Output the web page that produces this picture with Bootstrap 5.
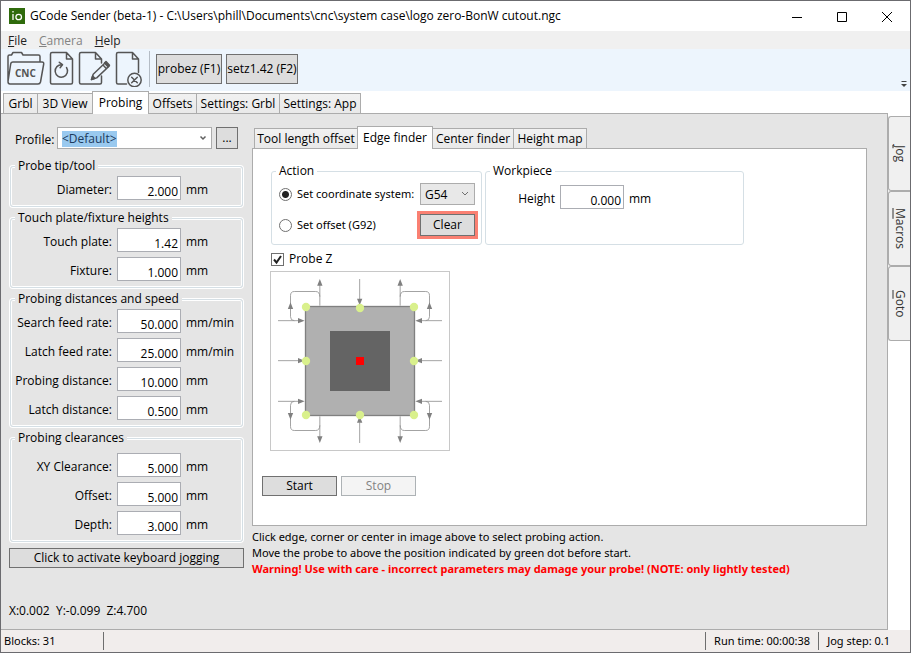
<!DOCTYPE html>
<html lang="en">
<head>
<meta charset="utf-8">
<meta name="viewport" content="width=device-width, initial-scale=1">
<title>GCode Sender (beta-1)</title>
<link rel="stylesheet" href="https://cdn.jsdelivr.net/npm/bootstrap@5.3.0/dist/css/bootstrap.min.css">
<style>
  body { font-family: "Open Sans", "Noto Sans", sans-serif; font-size: 12px; line-height: 16px; color: #000; }
  button, input, select { font: inherit; color: inherit; }
  .win { border: 1px solid #6b6b6f; background: #fff; }
  .titlebar { height: 30px; padding-left: 8px; }
  .appicon { width: 16px; height: 16px; margin-right: 5px; }
  .winbtn { width: 45px; height: 30px; border: 0; background: none; padding: 0 2px 0 0; }
  .menubar { background: #f0f0f0; height: 18px; padding: 2px 7px 0; gap: 12px; }
  .menubar a { color: #222; text-decoration: none; }
  .menubar a.off { color: #838383; }
  .tools { background: #edf5fd; height: 42px; padding: 2px 3px 0 5px; }
  .tools .ico { border: 0; background: none; padding: 0; display: block; line-height: 0; }
  .tools .ico svg { fill: none; stroke: #555; stroke-width: 1.5; stroke-linejoin: round; stroke-linecap: round; }
  .tools .sep { width: 1px; height: 36px; background: #b4bcc5; margin: 0 6px 0 5px; }
  .more { border: 0; background: none; padding: 0; line-height: 0; margin: 0 0 4px auto; }
  .wbtn { border: 1px solid #707070; background: #ddd; border-radius: 0; padding: 0; height: 20px; line-height: 18px; color: #000; text-align: center; white-space: nowrap; }
  .wbtn:disabled { background: #f4f4f4; border-color: #adb2b5; color: #838383; }
  .tall { height: 30px; margin: 3px 4px 0 0; }
  .w66 { width: 66px; } .w72 { width: 72px; } .w75 { width: 75px; } .w22 { width: 22px; }
  .strip { padding-left: 2px; height: 22px; position: relative; z-index: 1; }
  .strip button { height: 20px; padding: 0; border: 1px solid #acacac; border-left-width: 0; border-bottom: 0; background: linear-gradient(#f1f1f1, #e9e9e9); text-align: center; white-space: nowrap; }
  .strip button:first-child { border-left-width: 1px; }
  .strip button.on { height: 23px; background: #fff; border-left-width: 1px; margin: 0 0 -1px -1px; }
  .w35 { width: 35px; } .w55 { width: 55px; } .w57 { width: 57px; } .w48 { width: 48px; } .w83 { width: 83px; } .w82 { width: 81px; }
  .w104 { width: 104px; } .w76 { width: 76px; } .w81 { width: 81px; } .w74 { width: 73px; }
  .page { background: #e5e5e5; border: 1px solid #acacac; border-left: 0; padding: 12px 20px 0 8px; gap: 8px; }
  .side { width: 235px; flex: none; }
  .profile { height: 22px; margin: 1px 6px 9px; }
  .profile label { width: 42px; padding-top: 5px; white-space: nowrap; }
  .combo { appearance: none; border: 1px solid #acacac; border-radius: 0; background-color: #fff; height: 22px; padding: 1px 4px 0; background-repeat: no-repeat; }
  .picker { width: 155px; color: #1c3a5c; margin-right: 4px;
    background-image: url("data:image/svg+xml,%3Csvg xmlns='http://www.w3.org/2000/svg' width='8' height='6'%3E%3Cpath d='M1.500 1.500 4 4 6.500 1.500' fill='none' stroke='%23606060' stroke-width='1.500'/%3E%3C/svg%3E"), linear-gradient(#99c9ef, #99c9ef);
    background-position: right 4px top 7px, 4px 3px; background-size: 8px 6px, 55px 16px; }
  .gbox { border: 1px solid #d5dfe5; border-radius: 3px; box-shadow: 0 0 0 1px #fff, inset 0 0 0 1px #fff; margin: 0 1px 3px; padding: 2px 2px 6px; min-width: 0; }
  .gbox legend { float: none; width: auto; font-size: inherit; line-height: 16px; margin: 0 0 0 2px; padding: 0 3px; background: #e5e5e5; }
  .gbox.low { padding-top: 7px; margin-bottom: 6px; }
  .gbox .lines { gap: 5px; }
  .fieldline { gap: 5px; height: 24px; }
  .fieldline label { width: 99px; text-align: right; white-space: nowrap; }
  .fieldline label, .fieldline span { padding-top: 4px; }
  .fieldline input { width: 64px; height: 24px; border: 1px solid #abadb3; border-radius: 0; padding: 6px 2px 0 0; text-align: right; background: #fff; }
  .pos { margin-top: 35px; white-space: pre; }
  .panel { background: #fff; border: 1px solid #acacac; height: 378px; padding: 14px 9px 0; }
  .panel .gbox { margin: 0; padding-bottom: 6px; height: 82px; box-shadow: none; }
  .panel .gbox legend { background: #fff; }
  .indent { margin-left: 9px; }
  .groups { gap: 3px; }
  .action { width: 211px; } .work { width: 259px; }
  .optrow { height: 22px; padding-left: 5px; padding-right: 4px; margin: 2px 0 9px; }
  .optrow input, .tick { margin: 0 5px 0 0; flex: none; appearance: none; width: 13px; height: 13px; border: 1px solid #707070; background: #fff; border-radius: 50%; }
  .optrow input:checked { background: radial-gradient(circle, #222 0 3px, #fff 4px); }
  .optrow label { white-space: nowrap; }
  .tick { border-radius: 0; }
  .tick:checked { background: url("data:image/svg+xml,%3Csvg xmlns='http://www.w3.org/2000/svg' viewBox='0 0 11 11'%3E%3Cpath d='M2 5.500 4.500 8.500 9 2' fill='none' stroke='%23222' stroke-width='2'/%3E%3C/svg%3E"); }
  .g54 { width: 55px; background-color: #e8e8e8; flex: none;
    background-image: url("data:image/svg+xml,%3Csvg xmlns='http://www.w3.org/2000/svg' width='8' height='6'%3E%3Cpath d='M1 1 4 4 7 1' fill='none' stroke='%23707070'/%3E%3C/svg%3E"); background-position: right 5px top 7px; }
  .clear { width: 55px; height: 22px; line-height: 20px; box-shadow: 0 0 0 3px #fa8072; }
  .probez { height: 16px; margin-top: 6px; }
  .work .fieldline { margin: 4px 0 0; }
  .work .fieldline label { width: 67px; }
  .plan { display: block; width: 180px; height: 180px; margin: 4px 0 25px 8px; }
  .runs { gap: 4px; }
  .hints, .optrow label, .status { font-family: "Noto Sans", "Open Sans", sans-serif; font-size: 11px; }
  .hints { margin-top: 3px; }
  .warn { color: #f00; font-weight: 700; }
  .dock { width: 22px; flex: none; padding-top: 3px; }
  .dock button { height: 75px; width: 22px; padding: 0; border: 1px solid #acacac; border-right: 0; border-radius: 3px 0 0 3px; background: #f0f0f0; writing-mode: vertical-rl; text-align: center; line-height: 20px; color: #333; }
  .status { background: #f1edec; height: 22px; padding: 0 20px 0 3px; }
  .status .bar { width: 1px; height: 18px; background: #6e6e6e; margin: 0 8px; }
  .blocks { width: 91px; }
</style>
</head>
<body>
<div class="win min-vh-100 d-flex flex-column">
  <header class="titlebar d-flex align-items-center">
    <svg class="appicon" viewBox="0 0 16 16" aria-hidden="true"><rect width="16" height="16" fill="#2f6b0c"/><path d="M4 6v6M4 3v1.500" stroke="#fff" stroke-width="1.300"/><ellipse cx="9.700" cy="9" rx="2.800" ry="2.700" fill="none" stroke="#fff" stroke-width="1.300"/></svg>
    <span class="flex-grow-1 text-nowrap">GCode Sender (beta-1) - C:\Users\phill\Documents\cnc\system case\logo zero-BonW cutout.ngc</span>
    <button class="winbtn" aria-label="Minimize"><svg width="12" height="12" viewBox="0 0 12 12"><path d="M1 6.500h10" stroke="#000"/></svg></button>
    <button class="winbtn" aria-label="Maximize"><svg width="12" height="12" viewBox="0 0 12 12"><path d="M1.500 1.500h9v9h-9z" fill="none" stroke="#000"/></svg></button>
    <button class="winbtn" aria-label="Close"><svg width="12" height="12" viewBox="0 0 12 12"><path d="M1 1l10 10M11 1 1 11" stroke="#000"/></svg></button>
  </header>
  <nav class="menubar d-flex" aria-label="Menu">
    <a href="#"><u>F</u>ile</a><a href="#" class="off"><u>C</u>amera</a><a href="#"><u>H</u>elp</a>
  </nav>
  <div class="tools d-flex align-items-start">
    <button class="ico" aria-label="Open CNC file"><svg width="42" height="36" viewBox="0 0 42 36">
      <path d="M2 30V5.500Q2 4 3.500 4h2L7 1.500h8.500L17 4h15.500Q34 4 34 5.500V11M2 30.500 4.700 13q.3-2 2.300-2h29q2 0 1.700 2L34.500 31q-.5 2-2.500 2H4q-2 0-2-2.500z"/>
      <text x="9" y="26" font-size="10" font-weight="700" fill="#555" stroke="none">CNC</text></svg></button>
    <button class="ico" aria-label="Reload file"><svg width="28" height="36" viewBox="0 0 28 36">
      <path d="M2.500 3q0-1.500 1.500-1.500h14.500L24.500 8v23.500q0 1.500-1.500 1.500H4q-1.500 0-1.500-1.500zM18.500 1.500V8h6M18.500 16.500a6.200 6.200 0 1 1-4.500-2.700M11.300 11.300l3.200 2.400-2.400 3"/></svg></button>
    <button class="ico" aria-label="Edit file"><svg width="36" height="36" viewBox="0 0 36 36">
      <path d="M25.500 25v6.500q0 1.500-1.500 1.500H5q-1.500 0-1.500-1.500V3q0-1.500 1.500-1.500h14.500L25.500 8v4M19.500 1.500V8h6"/>
      <path d="M15.500 28.500l1.700-5.300L29.500 11.500l3.500 3.700-12.300 11.700zM27 14l3.500 3.700"/><path d="M15.500 28.500l1.200-3.500 2.300 2.400zM28.500 12l1.500-1.500 3.500 3.700-1.500 1.500z" fill="#555"/></svg></button>
    <button class="ico" aria-label="Close file"><svg width="32" height="36" viewBox="0 0 32 36">
      <path d="M14.500 33H6q-1.500 0-1.500-1.500V3q0-1.500 1.500-1.500h14.500L26.500 8v13.500M20.500 1.500V8h6"/><circle cx="22.500" cy="29" r="6.700"/><path d="M19.700 26.200l5.600 5.600M25.300 26.200l-5.600 5.600"/></svg></button>
    <div class="sep"></div>
    <button class="wbtn tall w66">probez (F1)</button>
    <button class="wbtn tall w72">setz1.42 (F2)</button>
    <button class="more align-self-end" aria-label="More tools"><svg width="6" height="6" viewBox="0 0 6 6"><path d="M.500.500h5" stroke="#444"/><path d="M0 3h6L3 6z" fill="#444"/></svg></button>
  </div>
  <div class="strip d-flex align-items-end">
    <button class="w35">Grbl</button><button class="w55">3D View</button><button class="w57 on">Probing</button><button class="w48">Offsets</button><button class="w83">Settings: Grbl</button><button class="w82">Settings: App</button>
  </div>
  <main class="d-flex flex-grow-1">
    <div class="page d-flex flex-grow-1">
      <section class="side">
        <div class="profile d-flex">
          <label for="profile">Profile:</label>
          <select id="profile" class="combo picker"><option>&lt;Default&gt;</option></select>
          <button class="wbtn w22 h-100">...</button>
        </div>
        <fieldset class="gbox"><legend>Probe tip/tool</legend>
          <div class="fieldline d-flex align-items-center"><label for="dia">Diameter:</label><input id="dia" value="2.000"><span>mm</span></div>
        </fieldset>
        <fieldset class="gbox"><legend>Touch plate/fixture heights</legend>
          <div class="lines d-flex flex-column">
            <div class="fieldline d-flex align-items-center"><label for="tp">Touch plate:</label><input id="tp" value="1.42"><span>mm</span></div>
            <div class="fieldline d-flex align-items-center"><label for="fx">Fixture:</label><input id="fx" value="1.000"><span>mm</span></div>
          </div>
        </fieldset>
        <fieldset class="gbox"><legend>Probing distances and speed</legend>
          <div class="lines d-flex flex-column">
            <div class="fieldline d-flex align-items-center"><label for="sf">Search feed rate:</label><input id="sf" value="50.000"><span>mm/min</span></div>
            <div class="fieldline d-flex align-items-center"><label for="lf">Latch feed rate:</label><input id="lf" value="25.000"><span>mm/min</span></div>
            <div class="fieldline d-flex align-items-center"><label for="pd">Probing distance:</label><input id="pd" value="10.000"><span>mm</span></div>
            <div class="fieldline d-flex align-items-center"><label for="ld">Latch distance:</label><input id="ld" value="0.500"><span>mm</span></div>
          </div>
        </fieldset>
        <fieldset class="gbox low"><legend>Probing clearances</legend>
          <div class="lines d-flex flex-column">
            <div class="fieldline d-flex align-items-center"><label for="xy">XY Clearance:</label><input id="xy" value="5.000"><span>mm</span></div>
            <div class="fieldline d-flex align-items-center"><label for="of">Offset:</label><input id="of" value="5.000"><span>mm</span></div>
            <div class="fieldline d-flex align-items-center"><label for="dp">Depth:</label><input id="dp" value="3.000"><span>mm</span></div>
          </div>
        </fieldset>
        <button class="wbtn w-100">Click to activate keyboard jogging</button>
        <div class="pos">X:0.002  Y:-0.099  Z:4.700</div>
      </section>
      <section class="flex-grow-1">
        <div class="strip d-flex align-items-end">
          <button class="w104">Tool length offset</button><button class="w76 on">Edge finder</button><button class="w81">Center finder</button><button class="w74">Height map</button>
        </div>
        <div class="panel">
          <div class="groups indent d-flex">
            <fieldset class="gbox action"><legend>Action</legend>
              <div class="optrow d-flex align-items-center">
                <input type="radio" name="act" id="cs" checked><label for="cs" class="flex-grow-1">Set coordinate system:</label>
                <select class="combo g54" aria-label="Coordinate system"><option>G54</option></select>
              </div>
              <div class="optrow d-flex align-items-center">
                <input type="radio" name="act" id="so"><label for="so" class="flex-grow-1">Set offset (G92)</label>
                <button class="wbtn clear">Clear</button>
              </div>
            </fieldset>
            <fieldset class="gbox work"><legend>Workpiece</legend>
              <div class="fieldline d-flex align-items-center"><label for="wh">Height</label><input id="wh" value="0.000"><span>mm</span></div>
            </fieldset>
          </div>
          <div class="probez indent d-flex align-items-center"><input type="checkbox" class="tick" id="pz" checked><label for="pz">Probe Z</label></div>
          <svg class="plan" viewBox="15 18 540 540" role="img" aria-label="Probing positions">
            <rect x="16.500" y="19.500" width="537" height="537" fill="#fff" stroke="#c8c8c8" stroke-width="3"/>
            <rect x="121.500" y="124.500" width="327" height="327" fill="#b0b0b0" stroke="#808080" stroke-width="4"/>
            <rect x="195" y="198" width="180" height="180" fill="#646464"/>
            <rect x="273" y="276" width="24" height="24" fill="#f00"/>
            <defs>
              <g id="corner">
                <path d="M164.500 122V60M164.500 95Q164 79.500 152 79.500H88Q76.500 79.500 76.500 92V155Q76.500 167 88 167M39 167H102" fill="none" stroke="#909090" stroke-width="2.500"/>
                <path d="M164.500 42l8 20h-16zM76.500 112l8 20h-16zM119 167l-20 8v-16z" fill="#808080"/>
              </g>
            </defs>
            <use href="#corner"/>
            <use href="#corner" transform="translate(570 0) scale(-1 1)"/>
            <use href="#corner" transform="translate(0 576) scale(1 -1)"/>
            <use href="#corner" transform="translate(570 576) scale(-1 -1)"/>
            <path d="M39 287H102M531 287H468M284 42V104M284 534V472" stroke="#909090" stroke-width="2.500"/>
            <path d="M119 287l-20 8v-16zM451 287l20 8v-16zM284 121l8-20h-16zM284 453l8 20h-16z" fill="#808080"/>
            <g fill="#d9f08c"><circle cx="123" cy="126" r="12.500"/><circle cx="285" cy="129" r="12.500"/><circle cx="447" cy="126" r="12.500"/><circle cx="123" cy="288" r="12.500"/><circle cx="447" cy="288" r="12.500"/><circle cx="123" cy="450" r="12.500"/><circle cx="285" cy="450" r="12.500"/><circle cx="447" cy="450" r="12.500"/></g>
          </svg>
          <div class="runs d-flex"><button class="wbtn w75">Start</button><button class="wbtn w75" disabled>Stop</button></div>
        </div>
        <div class="hints">
          <div>Click edge, corner or center in image above to select probing action.</div>
          <div>Move the probe to above the position indicated by green dot before start.</div>
          <div class="warn">Warning! Use with care - incorrect parameters may damage your probe! (NOTE: only lightly tested)</div>
        </div>
      </section>
    </div>
    <aside class="dock d-flex flex-column">
      <button><u>J</u>og</button><button><u>M</u>acros</button><button><u>G</u>oto</button>
    </aside>
  </main>
  <footer class="status d-flex align-items-center">
    <span class="blocks">Blocks: 31</span><div class="bar"></div>
    <span class="ms-auto"></span><div class="bar"></div><span>Run time: 00:00:38</span><div class="bar"></div><span>Jog step: 0.1</span>
  </footer>
</div>
<script src="https://cdn.jsdelivr.net/npm/bootstrap@5.3.0/dist/js/bootstrap.bundle.min.js"></script>
</body>
</html>
